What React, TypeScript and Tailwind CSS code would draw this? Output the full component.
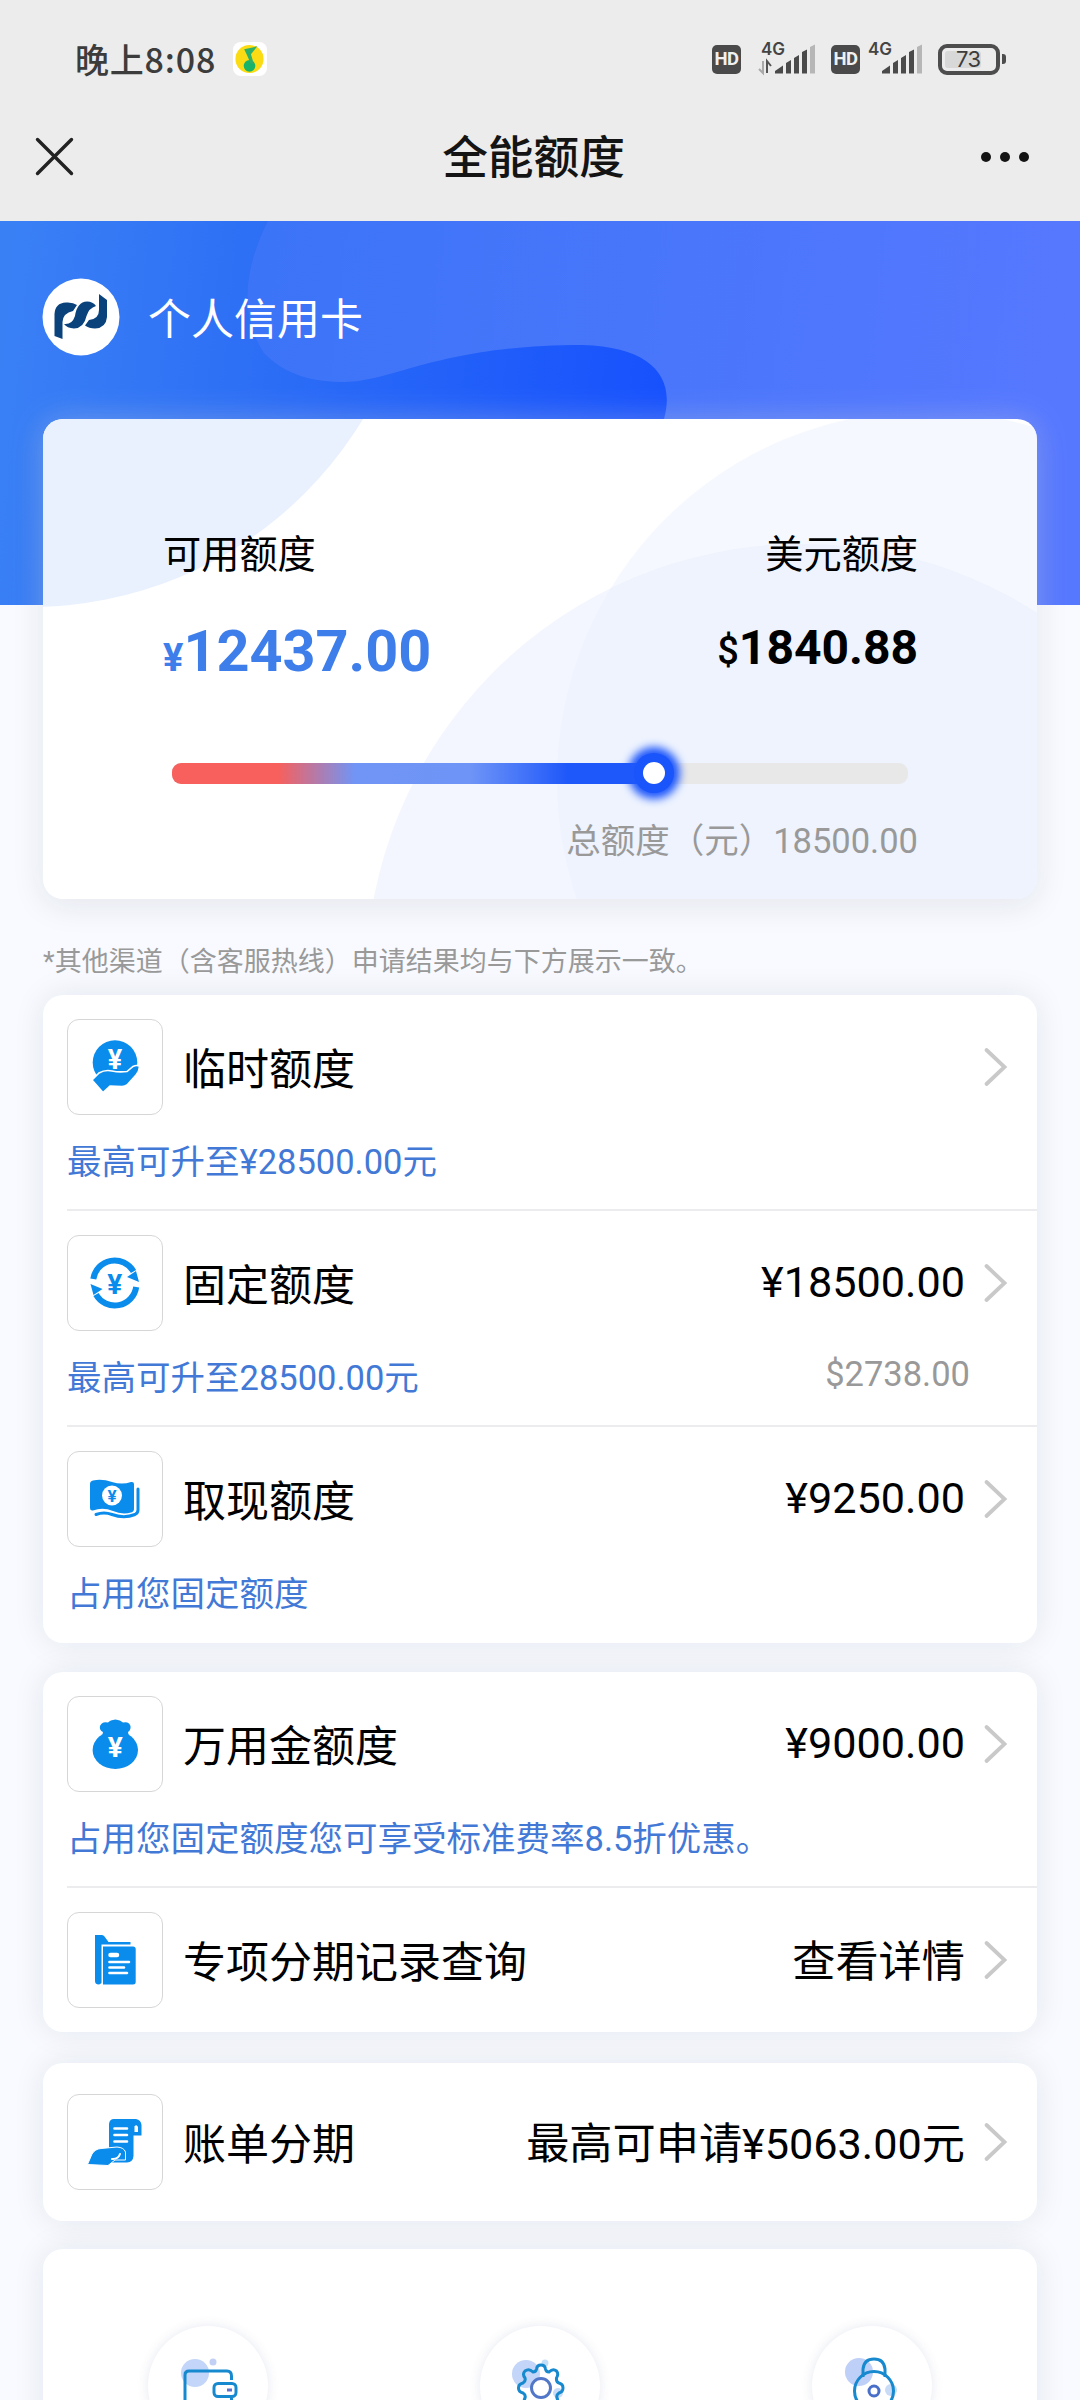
import type { ReactNode } from "react";

const BLUE = "#0a8cec";

function Yen({ x, y, size, fill }: { x: number; y: number; size: number; fill: string }) {
  return (
    <text x={x} y={y} fontSize={size} fill={fill} textAnchor="middle" fontWeight={700} fontFamily="Roboto, sans-serif">¥</text>
  );
}

function HandCoinIcon() {
  return (
    <>
      <circle cx="48" cy="43.5" r="22.3" fill={BLUE} />
      <path d="M25 61 L32 54 Q38 50.5 45 52 Q52 53.5 60 52.5 L66 47.5 Q70 45.5 72.5 47.5 Q72 53 69 56 L60 66 Q58 67.5 55 67.5 L43 67 L36 73.5 Z" fill={BLUE} stroke="#fff" strokeWidth="1.6" />
      <Yen x={48} y={50} size={27} fill="#fff" />
    </>
  );
}

function CycleIcon() {
  return (
    <>
      <g fill="none" stroke={BLUE} strokeWidth="6">
        <path d="M26.3 44 A21.6 21.6 0 0 1 66.5 36.5" />
        <path d="M69.2 52 A21.6 21.6 0 0 1 29 59.5" />
      </g>
      <path d="M60 42 L69 36 L72 47 Z M35.5 54 L26.5 60 L23.5 49 Z" fill={BLUE} />
      <Yen x={47.7} y={58.5} size={28} fill={BLUE} />
    </>
  );
}

function CashIcon() {
  return (
    <>
      <path d="M23 33 Q23 30 26 29.5 Q35 27.5 45 31 Q55 34 64 31 Q67 30.5 67 33 V58 Q67 60.5 64 61.5 Q55 64 46 60 Q36 56 26 59.5 Q23 60 23 57 Z" fill={BLUE} />
      <path d="M29 63.5 Q37 60.5 45 63.5 Q57 68 68 63.5 Q71 62 71 59 V38" fill="none" stroke={BLUE} strokeWidth="3" strokeLinecap="round" />
      <circle cx="45" cy="44.5" r="10" fill="#fff" />
      <Yen x={45} y={50.5} size={17} fill={BLUE} />
    </>
  );
}

function BagIcon() {
  return (
    <>
      <ellipse cx="48.3" cy="54" rx="22.7" ry="19" fill={BLUE} />
      <path d="M35 41 L36 36 Q32 34 33 30 Q35 25 41 26.5 Q43 24 48.5 23.5 Q53.5 24 56 26.5 Q62 25 63.5 30 Q64 34 61 36 L62 41 Z" fill={BLUE} />
      <Yen x={48.3} y={61} size={28} fill="#fff" />
    </>
  );
}

function RecordIcon() {
  return (
    <>
      <path d="M28 23 H35 Q36.5 23 37.5 24.5 L41.5 30 H63.5 V32.5 H34.5 V71 Q33 72.5 31 72.5 Q28 72 28 69 Z" fill={BLUE} />
      <path d="M36 34.5 H66 Q68.7 34.5 68.7 37 V70 Q68.7 72.5 66 72.5 H36 Z" fill={BLUE} />
      <g stroke="#fff" strokeLinecap="round">
        <path d="M43.5 43 H50" strokeWidth="4.5" />
        <path d="M42.5 50 H62 M42.5 55.5 H57 M42.5 61 H60" strokeWidth="2.6" />
      </g>
    </>
  );
}

function BillIcon() {
  return (
    <>
      <path d="M42 54 V30 Q42.5 25 47 25 H69 Q74 26 74.5 31 V41.5 H66.5 V62 Q66 68 60 68.5 H44 Z" fill={BLUE} />
      <path d="M47.5 34.5 H60 M47.5 41 H60 M47.5 47.5 H60" stroke="#fff" strokeWidth="2.6" strokeLinecap="round" />
      <path d="M71 38 V33 Q69.5 30 67.5 32.5 V38 Z" fill="#fff" />
      <path d="M20.5 70.5 L25 60 Q28 55 34 54.5 L50 53 Q57 53.500 58.500 58 V66 H48 L41 71.5 Z" fill={BLUE} stroke="#fff" strokeWidth="1" />
      <path d="M45 65 Q51 65.5 53 60" fill="none" stroke="#fff" strokeWidth="2" strokeLinecap="round" />
    </>
  );
}

function Chevron() {
  return (
    <svg className="block h-[40px] w-[26px]" viewBox="0 0 26 40" fill="none" stroke="#c9c9c9" strokeWidth="3.8">
      <path d="M3.5 3 L21.5 20 L3.5 37" strokeLinecap="round" />
    </svg>
  );
}

type RowProps = {
  icon: ReactNode;
  title: string;
  value?: string;
  note?: string;
  sideNote?: string;
  // values with Chinese text sit a little lower than plain amounts
  lowValue?: boolean;
  last?: boolean;
};

function Row({ icon, title, value, note, sideNote, lowValue, last }: RowProps) {
  return (
    <div className={`ml-6 ${note ? "h-[216px]" : "h-[144px]"} ${last ? "" : "border-b-2 border-[#ececee]"}`}>
      <div className="flex h-[144px] items-center pr-[28px]">
        <span className="size-[96px] shrink-0 rounded-[12px] border border-[#d6d6d6]">
          <svg className="-m-px block size-[96px]" viewBox="0 0 96 96">{icon}</svg>
        </span>
        <span className="ml-5 pt-[6px] text-[43px] leading-[60px]">{title}</span>
        <span className={`mr-[18px] ml-auto text-[43.2px] leading-[60px] ${lowValue ? "pt-[5px]" : ""}`}>{value}</span>
        <Chevron />
      </div>
      {note && (
        <div className="-mt-[2px] flex items-center justify-between pr-[67px] text-[34.5px] leading-[50px]">
          <span className="text-[#4379d6]">{note}</span>
          <span className="-mt-2 text-[#999]">{sideNote}</span>
        </div>
      )}
    </div>
  );
}

function Panel({ className = "", children }: { className?: string; children: ReactNode }) {
  return (
    <div className={`mx-[43px] rounded-[20px] bg-white shadow-[0_0_32px_rgba(20,30,60,0.09)] ${className}`}>
      {children}
    </div>
  );
}

function Signal({ arrows }: { arrows?: boolean }) {
  return (
    <svg className="block h-[36px] w-[60px] overflow-visible" viewBox="0 0 60 36">
      <text x="6" y="14" fontSize="17" fontWeight="600" fill="#444" fontFamily="Inter, sans-serif">4G</text>
      {arrows && (
        <g fill="none" strokeWidth="2">
          <path d="M8 20 V32 L4 28" stroke="#aaa" />
          <path d="M12 32 V20 L16 25" stroke="#555" />
        </g>
      )}
      <path d="M20 32.5 V30 L28 24.5 V32.5 Z M31 32.5 V22 L36 19 V32.5 Z M39 32.5 V17 L44 14 V32.5 Z M47 32.5 V11 L52 8.5 V32.5 Z" fill="#4a4a4a" />
      <path d="M55 32.5 V6 L60 3.5 V32.5 Z" fill="#b6b6b6" />
    </svg>
  );
}

function Hd() {
  return (
    <span className="flex h-[29px] w-[29px] items-center justify-center rounded-[5px] bg-[#4a4a4a] font-[Roboto] text-[18.5px] leading-[29px] font-bold tracking-[-0.5px] text-[#f0f0f0]">
      HD
    </span>
  );
}

function StatusBar() {
  return (
    <div className="flex h-[118px] items-center pr-[74px] pl-[75px] text-[#3c3c3c]">
      <span className="-mt-[2px] font-['Noto_Sans_CJK_SC'] text-[34px] font-medium tracking-[0.8px]">晚上8:08</span>
      <svg className="ml-[17px] block size-[34px]" viewBox="0 0 35 35">
        <rect width="35" height="35" rx="8" fill="#fff" />
        <circle cx="17" cy="17.5" r="14.5" fill="#fbdc14" />
        <circle cx="17" cy="24.5" r="6" fill="#17b368" />
        <path d="M11.5 7.5 L25 4.5 L18.5 12.5 L21.5 23 L18 22 L14 12.5 Z" fill="#2db06a" />
      </svg>
      <div className="ml-auto flex items-center">
        <Hd />
        <div className="ml-[14px]"><Signal arrows /></div>
        <div className="ml-[16px]"><Hd /></div>
        <div className="ml-[2px]"><Signal /></div>
        <div className="ml-[16px] flex h-[31px] w-[62px] items-center rounded-[9px] border-4 border-[#4d4d4d] p-[3px]">
          <div className="flex h-[17px] w-[36px] items-center rounded-[3px] bg-[#d8d8d8] pl-[11px] font-[Inter] text-[22px] tracking-[-0.5px]">73</div>
        </div>
        <div className="ml-[2px] h-[10px] w-[4px] rounded-r-[3px] bg-[#4d4d4d]" />
      </div>
    </div>
  );
}

function TitleBar() {
  return (
    <div className="flex h-[103px] items-center justify-between pr-[51px] pb-[26px] pl-[34px]">
      <svg className="block size-[42px]" viewBox="0 0 42 42" stroke="#222" strokeWidth="3.4" strokeLinecap="round">
        <path d="M3.5 3.5 L37.5 37.5 M37.500 3.500 L3.500 37.500" />
      </svg>
      <h1 className="pt-[5px] pl-[10px] text-[45.7px] leading-none font-medium text-[#141414]">全能额度</h1>
      <div className="flex gap-[9px]">
        <i className="size-[10px] rounded-full bg-[#141414]" />
        <i className="size-[10px] rounded-full bg-[#141414]" />
        <i className="size-[10px] rounded-full bg-[#141414]" />
      </div>
    </div>
  );
}

function HeroBackground() {
  return (
    <svg className="absolute top-0 left-0 h-[384px] w-full" viewBox="0 0 1080 384" preserveAspectRatio="none">
      <defs>
        <linearGradient id="deep" gradientUnits="userSpaceOnUse" x1="0" y1="110" x2="665" y2="170">
          <stop offset="0" stopColor="#3a80f5" />
          <stop offset="0.35" stopColor="#2e70f5" />
          <stop offset="1" stopColor="#1751fd" />
        </linearGradient>
        <linearGradient id="wave" gradientUnits="userSpaceOnUse" x1="240" y1="0" x2="1080" y2="100">
          <stop offset="0" stopColor="#3b74f7" />
          <stop offset="1" stopColor="#5678ff" />
        </linearGradient>
      </defs>
      <rect width="1080" height="384" fill="url(#deep)" />
      <path d="M268 0 C243 50 240 95 264 132 C286 155 315 161 345 161 C395 160 440 124 583 124 C650 126 676 155 664 198 L620 384 H1080 V0 Z" fill="url(#wave)" />
    </svg>
  );
}

function BankLogo() {
  return (
    <svg className="block size-[78px]" viewBox="0 0 78 78">
      <circle cx="39" cy="39" r="38.5" fill="#fff" />
      <g fill="#0a427c">
        <path d="M20.5 61 L12.5 58 V36 Q13 25 24 24.5 Q31 24 35 27 L31 33 Q21 35 20.5 44 Z" />
        <path d="M22 46 Q30 47 33 38 Q35 24 45 23.5 Q51 23.500 54 28 Q47 30 44.500 38 Q42 50 32 50.5 Q25 50 22 46 Z" />
        <path d="M57 16 L65 22 V39 Q64 50 53 50.500 Q47 50.500 43 47.500 L47 42 Q57 41 57 32 Z" />
      </g>
    </svg>
  );
}

function LimitCard() {
  return (
    <div className="relative mx-[43px] mt-[63px] h-[480px] rounded-[20px] bg-white shadow-[0_0_32px_rgba(255,255,255,0.3),0_6px_32px_rgba(20,30,60,0.1)]">
      <svg className="absolute inset-0 size-full rounded-[20px]" viewBox="43 419 994 480">
        <circle cx="30" cy="218" r="389" fill="#eaf1fe" />
        <circle cx="926" cy="780" r="369" fill="#e8effd" fillOpacity="0.45" />
        <circle cx="802" cy="980" r="436" fill="#e7eefd" fillOpacity="0.5" />
      </svg>
      <div className="relative pt-[108px] pr-[119px] pl-[120px]">
        <div className="flex justify-between text-[38.2px] leading-[56px]">
          <span>可用额度</span>
          <span>美元额度</span>
        </div>
        <div className="mt-[29px] flex items-start justify-between leading-[80px] font-bold">
          <span className="text-[57.6px] text-[#3e7eea]"><span className="text-[38px]">¥</span>12437.00</span>
          <span className="-mt-[4px] text-[48px]"><span className="text-[38px] font-medium">$</span>1840.88</span>
        </div>
        <div className="relative mt-[65px] mr-[10px] ml-[9px] h-[21px] rounded-[9px] bg-[#e8e8e8]">
          <div className="h-full w-[482px] rounded-l-[9px] bg-[linear-gradient(90deg,#f7605c_0%,#f7605c_22%,#7095f6_38%,#6e94f7_62%,#1f58fa_82%,#1f58fa_100%)]" />
          <div className="absolute -top-[10px] left-[462px] size-[40px] rounded-full bg-[#1a54fb] shadow-[0_0_9px_6px_#1f58fb]">
            <div className="m-[9px] size-[22px] rounded-full bg-white" />
          </div>
        </div>
        <div className="mt-[32px] text-right text-[34.5px] leading-[50px] text-[#999]">总额度（元）18500.00</div>
      </div>
    </div>
  );
}

function Shortcut({ children }: { children: ReactNode }) {
  return (
    <div className="size-[120px] rounded-full bg-white shadow-[0_0_12px_rgba(60,70,140,0.12)]">
      <svg className="block size-[120px]" viewBox="0 0 120 120" fill="none" strokeWidth="3">{children}</svg>
    </div>
  );
}

export default function App() {
  return (
    <div className="h-[2400px] w-[1080px] overflow-hidden bg-[#f8faff] font-[Roboto,'Noto_Sans_CJK_SC',sans-serif] text-black">
      <header className="bg-[#ececec]">
        <StatusBar />
        <TitleBar />
      </header>

      <section className="relative">
        <HeroBackground />
        <div className="relative flex h-[135px] items-end pl-[42px]">
          <BankLogo />
          <span className="ml-[28px] text-[43px] leading-[72px] text-white">个人信用卡</span>
        </div>
        <LimitCard />
      </section>

      <p className="mt-[43px] ml-[43px] h-[53px] text-[27px] leading-[41px] text-[#999]">*其他渠道（含客服热线）申请结果均与下方展示一致。</p>

      <Panel>
        <Row icon={<HandCoinIcon />} title="临时额度" note="最高可升至¥28500.00元" />
        <Row icon={<CycleIcon />} title="固定额度" value="¥18500.00" note="最高可升至28500.00元" sideNote="$2738.00" />
        <Row icon={<CashIcon />} title="取现额度" value="¥9250.00" note="占用您固定额度" last />
      </Panel>

      <Panel className="mt-[29px]">
        <Row icon={<BagIcon />} title="万用金额度" value="¥9000.00" note="占用您固定额度您可享受标准费率8.5折优惠。" />
        <Row icon={<RecordIcon />} title="专项分期记录查询" value="查看详情" lowValue last />
      </Panel>

      <Panel className="mt-[31px] py-[7px]">
        <Row icon={<BillIcon />} title="账单分期" value="最高可申请¥5063.00元" lowValue last />
      </Panel>

      <Panel className="mt-[28px] flex h-[300px] justify-between px-[105px] pt-[77px]">
        <Shortcut>
          <circle cx="47" cy="47" r="14" fill="#c3d5f8" />
          <circle cx="65" cy="36" r="3.5" fill="#c3d0f5" />
          <path d="M37 80 V49 Q37 45 41 45 H79 Q83.5 45 83.5 50 V54 M83.5 72 V80" stroke="#1689cf" />
          <rect x="66" y="57.5" width="22" height="13" rx="4" fill="#fff" stroke="#1689cf" />
          <path d="M79 64 H84" stroke="#5a6fd0" />
        </Shortcut>
        <Shortcut>
          <circle cx="46" cy="48" r="14" fill="#c3d5f8" />
          <circle cx="65" cy="37" r="3.5" fill="#c3dff8" />
          <circle cx="78" cy="67" r="5" fill="#c8dcf8" />
          <path d="M56.5 43 Q57 39 61 39 Q65 39 65.5 43 Q66 46 69 46 Q73 42 76.5 45 Q79 48 76.5 52 Q76 56 79 57 Q83 58 83 62 Q83 66 79 67 Q76 69 77 72 Q79 76 76 79 H46 Q43 76 45 72 Q46 69 43 67 Q38.5 66 38.5 62 Q38.5 58 43 57 Q46 55 45 52 Q42 48 45 45 Q49 42 53 46 Q56 46 56.5 43 Z" stroke="#1689cf" />
          <circle cx="61" cy="62" r="9.5" fill="#fff" stroke="#5277c8" />
        </Shortcut>
        <Shortcut>
          <circle cx="47" cy="46" r="14" fill="#bed0f8" />
          <circle cx="79" cy="64" r="6" fill="#c8dcf8" />
          <path d="M51 51 V43 Q52 33 62 33 Q72 33 73 43 V51" stroke="#1689cf" />
          <circle cx="62" cy="65" r="19.5" stroke="#1689cf" />
          <circle cx="62" cy="65" r="5" stroke="#4a6fc8" fill="#fff" />
        </Shortcut>
      </Panel>
    </div>
  );
}
